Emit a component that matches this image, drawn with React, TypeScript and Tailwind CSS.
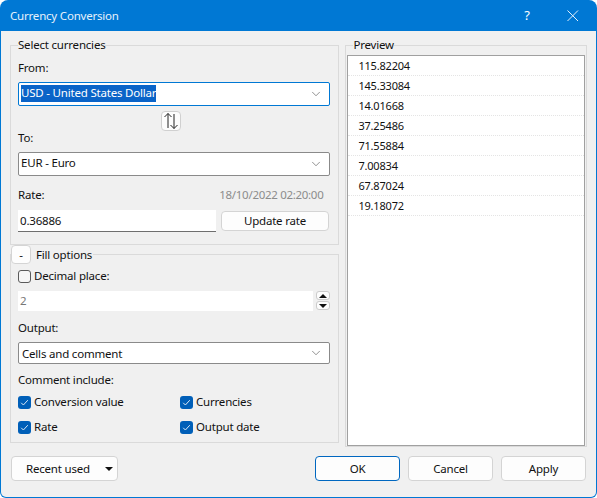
import { ChevronDown } from "lucide-react";

const PREVIEW = ["115.82204", "145.33084", "14.01668", "37.25486", "71.55884", "7.00834", "67.87024", "19.18072"];

function Combo({ value, focused, h, textClass }: { value: string; focused?: boolean; h: string; textClass?: string }) {
	return (
		<div
			className={`${h} w-[312px] bg-white border rounded-[2px] flex items-center justify-between pl-[2px] pr-[6px] ${
				focused ? "border-[#0078d4]" : "border-[#8a8a8a]"
			}`}
		>
			{focused ? (
				<span className="bg-[#0a64c8] text-white h-[17px] leading-[16px] mb-[1px]">{value}</span>
			) : (
				<span className={textClass}>{value}</span>
			)}
			<ChevronDown size={14} strokeWidth={1} className="text-[#444]" />
		</div>
	);
}

function Check({ label, checked, className }: { label: string; checked?: boolean; className?: string }) {
	return (
		<div className={`flex items-center gap-[3px] h-[14px] ${className ?? ""}`}>
			<div
				className={`w-[13px] h-[13px] rounded-[3px] flex items-center justify-center ${
					checked ? "bg-[#005fb8]" : "bg-[#f6f6f6] border border-[#5a5a5a]"
				}`}
			>
				{checked && (
					<svg width="9" height="9" viewBox="0 0 9 9" fill="none" stroke="#dbe9f6" strokeWidth="1">
						<path d="M1.2 4.8 L3.4 7 L7.8 2.2" />
					</svg>
				)}
			</div>
			<span>{label}</span>
		</div>
	);
}

function Btn({ label, w, primary }: { label: string; w: string; primary?: boolean }) {
	return (
		<div
			className={`${w} h-[25px] bg-[#fdfdfd] rounded-[4px] border flex items-center justify-center ${
				primary ? "border-[#0067c0]" : "border-[#d4d4d4]"
			}`}
		>
			{label}
		</div>
	);
}

export default function App() {
	return (
		<div className="w-[597px] h-[498px] bg-[#0078d4] rounded-t-[8px] rounded-b-[6px] p-[1px] pt-0 overflow-hidden font-['Noto_Sans',sans-serif] text-[11.5px] tracking-[-0.2px] text-[#111] flex flex-col">
			{/* Title bar */}
			<div className="h-[31px] shrink-0 flex items-center justify-between text-white pl-[9px]">
				<span className="text-[11.5px] text-[#e6f1fb]">Currency Conversion</span>
				<div className="flex items-center">
					<span className="w-[46px] text-center text-[13px]">?</span>
					<svg width="46" height="14" viewBox="0 0 46 14" fill="none" stroke="#e6f1fb" strokeWidth="1">
						<path d="M17.5 1.5 L28 12 M28 1.5 L17.5 12" />
					</svg>
				</div>
			</div>

			{/* Body */}
			<div className="flex-1 bg-[#f0f0f0] rounded-b-[5px] flex flex-col px-[9px]">
				<div className="flex pt-[6px] h-[416px]">
					{/* Left column */}
					<div className="w-[330px] flex flex-col">
						<fieldset className="h-[208px] border border-[#dadada] min-w-0 px-[7px]">
							<legend className="h-[16px] leading-[16px]">Select currencies</legend>
							<div className="h-[14px] leading-[14px] mt-[8px]">From:</div>
							<div className="mt-[7px]">
								<Combo value="USD - United States Dollar" focused h="h-[24px]" />
							</div>
							<div className="flex justify-center mt-[5px] pr-[8px]">
								<div className="w-[20px] h-[20px] bg-[#fdfdfd] border border-[#d0d0d0] rounded-[4px] flex items-center justify-center">
									<svg width="16" height="18" viewBox="0 0 16 18" fill="none" stroke="#222" strokeWidth="1">
										<path d="M5 16 V1.5 M1.5 5 L5 1.5 L8.5 5 M11 2 V16.5 M7.5 13 L11 16.5 L14.5 13" />
									</svg>
								</div>
							</div>
							<div className="h-[14px] leading-[14px] mt-[0px]">To:</div>
							<div className="mt-[7px]">
								<Combo value="EUR - Euro" h="h-[24px]" textClass="mb-[2px]" />
							</div>
							<div className="flex justify-between h-[14px] leading-[14px] mt-[12px] pr-[8px]">
								<span>Rate:</span>
								<span className="text-[#8c8c8c] tracking-[-0.3px]">18/10/2022 02:20:00</span>
							</div>
							<div className="flex mt-[8px] gap-[5px] w-[312px]">
								<div className="w-[198px] h-[22px] bg-white border-b border-[#6e6e6e] flex items-center pl-[2px]">0.36886</div>
								<div className="w-[108px] h-[20px] mt-[1px] bg-[#fdfdfd] border border-[#d4d4d4] rounded-[4px] flex items-center justify-center">
									Update rate
								</div>
							</div>
						</fieldset>

						<fieldset className="h-[198px] border border-[#dadada] min-w-0 pl-[7px]">
							<legend className="h-[19px] -ml-[7px] flex items-center gap-[5px]">
								<div className="w-[20px] h-[19px] bg-[#fdfdfd] border border-[#d4d4d4] rounded-[4px] flex items-center justify-center">-</div>
								<span className="pr-[1px]">Fill options</span>
							</legend>
							<Check label="Decimal place:" className="mt-[5px]" />
							<div className="flex mt-[8px] w-[312px] justify-between">
								<div className="w-[295px] h-[20px] bg-white flex items-center pl-[2px] text-[#777]">2</div>
								<div className="w-[14px] h-[20px] flex flex-col gap-[1px]">
									<div className="h-[9px] bg-[#fdfdfd] border border-[#ccc] rounded-[3px] flex items-center justify-center">
										<div className="w-0 h-0 border-x-[4px] border-x-transparent border-b-[4px] border-b-[#111]" />
									</div>
									<div className="h-[9px] bg-[#fdfdfd] border border-[#ccc] rounded-[3px] flex items-center justify-center">
										<div className="w-0 h-0 border-x-[4px] border-x-transparent border-t-[4px] border-t-[#111]" />
									</div>
								</div>
							</div>
							<div className="h-[14px] leading-[14px] mt-[10px]">Output:</div>
							<div className="mt-[7px]">
								<Combo value="Cells and comment" h="h-[22px]" textClass="pl-[1px] mt-[1px]" />
							</div>
							<div className="h-[14px] leading-[14px] mt-[9px]">Comment include:</div>
							<div className="grid grid-cols-[162px_1fr] gap-y-[11px] mt-[8px]">
								<Check label="Conversion value" checked />
								<Check label="Currencies" checked />
								<Check label="Rate" checked />
								<Check label="Output date" checked />
							</div>
						</fieldset>
					</div>

					{/* Preview */}
					<fieldset className="ml-[6px] w-[242px] h-[410px] border border-[#dadada] min-w-0 px-[1px] flex flex-col">
						<legend className="ml-[6px] h-[16px] leading-[16px]">Preview</legend>
						<div className="h-[392px] mt-[2px] bg-white border border-[#a0a0a0] text-[11px]">
							{PREVIEW.map((v) => (
								<div key={v} className="h-[20px] border-b border-dotted border-[#e4e4e4] pl-[10px] pt-[1px] flex items-center">
									{v}
								</div>
							))}
						</div>
					</fieldset>
				</div>

				{/* Footer */}
				<div className="flex items-start pt-[9px] pl-[1px]">
					<div className="w-[107px] h-[25px] bg-[#fdfdfd] border border-[#d4d4d4] rounded-[4px] flex items-center pl-[14px]">
						<span>Recent used</span>
						<div className="ml-[15px] w-0 h-0 border-x-[4px] border-x-transparent border-t-[4px] border-t-[#111]" />
					</div>
					<div className="ml-auto flex gap-[8px] pr-[1px]">
						<Btn label="OK" w="w-[85px]" primary />
						<Btn label="Cancel" w="w-[85px]" />
						<Btn label="Apply" w="w-[85px]" />
					</div>
				</div>
			</div>
		</div>
	);
}
